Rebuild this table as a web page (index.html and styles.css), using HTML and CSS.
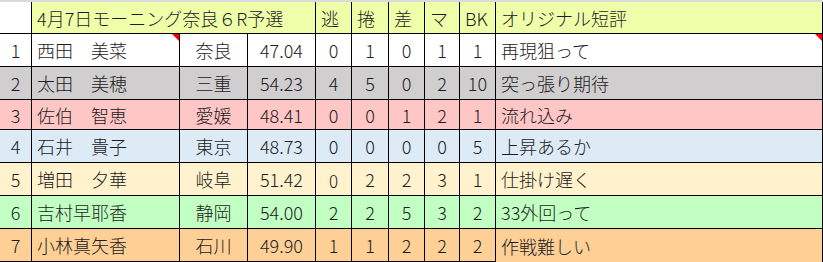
FILE: index.html
```html
<!DOCTYPE html>
<html lang="ja">
<head>
<meta charset="utf-8">
<title>4月7日モーニング奈良６R予選</title>
<link rel="stylesheet" href="styles.css">
</head>
<body>
<div class="sheet">
  <div class="row head">
    <div class="cell corner"></div>
    <div class="cell left">4月7日モーニング奈良６R予選</div>
    <div class="cell left">逃</div>
    <div class="cell left">捲</div>
    <div class="cell left">差</div>
    <div class="cell left">マ</div>
    <div class="cell left">BK</div>
    <div class="cell left">オリジナル短評</div>
  </div>
  <div class="row r1">
    <div class="cell">1</div>
    <div class="cell left note">西田　美菜</div>
    <div class="cell">奈良</div>
    <div class="cell">47.04</div>
    <div class="cell">0</div>
    <div class="cell">1</div>
    <div class="cell">0</div>
    <div class="cell">1</div>
    <div class="cell">1</div>
    <div class="cell left note">再現狙って</div>
  </div>
  <div class="row r2">
    <div class="cell">2</div>
    <div class="cell left">太田　美穂</div>
    <div class="cell">三重</div>
    <div class="cell">54.23</div>
    <div class="cell">4</div>
    <div class="cell">5</div>
    <div class="cell">0</div>
    <div class="cell">2</div>
    <div class="cell">10</div>
    <div class="cell left">突っ張り期待</div>
  </div>
  <div class="row r3 short">
    <div class="cell">3</div>
    <div class="cell left">佐伯　智恵</div>
    <div class="cell">愛媛</div>
    <div class="cell">48.41</div>
    <div class="cell">0</div>
    <div class="cell">0</div>
    <div class="cell">1</div>
    <div class="cell">2</div>
    <div class="cell">1</div>
    <div class="cell left">流れ込み</div>
  </div>
  <div class="row r4">
    <div class="cell">4</div>
    <div class="cell left">石井　貴子</div>
    <div class="cell">東京</div>
    <div class="cell">48.73</div>
    <div class="cell">0</div>
    <div class="cell">0</div>
    <div class="cell">0</div>
    <div class="cell">0</div>
    <div class="cell">5</div>
    <div class="cell left">上昇あるか</div>
  </div>
  <div class="row r5">
    <div class="cell">5</div>
    <div class="cell left">増田　夕華</div>
    <div class="cell">岐阜</div>
    <div class="cell">51.42</div>
    <div class="cell small">0</div>
    <div class="cell">2</div>
    <div class="cell">2</div>
    <div class="cell">3</div>
    <div class="cell">1</div>
    <div class="cell left">仕掛け遅く</div>
  </div>
  <div class="row r6">
    <div class="cell">6</div>
    <div class="cell left">吉村早耶香</div>
    <div class="cell">静岡</div>
    <div class="cell">54.00</div>
    <div class="cell">2</div>
    <div class="cell">2</div>
    <div class="cell">5</div>
    <div class="cell">3</div>
    <div class="cell">2</div>
    <div class="cell left">33外回って</div>
  </div>
  <div class="row r7">
    <div class="cell">7</div>
    <div class="cell left">小林真矢香</div>
    <div class="cell">石川</div>
    <div class="cell">49.90</div>
    <div class="cell">1</div>
    <div class="cell">1</div>
    <div class="cell">2</div>
    <div class="cell">2</div>
    <div class="cell">2</div>
    <div class="cell left open">作戦難しい</div>
  </div>
</div>
</body>
</html>
```

FILE: styles.css
```css
html, body {
  margin: 0;
  padding: 0;
  background: #ffffff;
}

.sheet {
  width: 823px;
  border-top: 2px solid #dadada;
  font-family: "Noto Sans CJK JP", "Noto Sans", sans-serif;
  font-size: 18px;
  font-weight: 300;
  color: #1c1c24;
}

.row {
  display: grid;
  grid-template-columns: 32px 148px 68px 68px 36px 37px 36px 35px 36px 327px;
  height: 33px;
}

.row.short {
  height: 30px;
}

.row.head {
  grid-template-columns: 32px 284px 36px 37px 36px 35px 36px 327px;
  height: 32px;
  background: #efffa9;
}

.cell {
  box-sizing: border-box;
  border-right: 1px solid #000;
  border-bottom: 1px solid #000;
  display: flex;
  align-items: center;
  justify-content: center;
  white-space: nowrap;
  line-height: 1;
  position: relative;
}

.cell.left {
  justify-content: flex-start;
  padding-left: 5px;
}

.cell.corner {
  background: #ffffff;
}

.cell.note::after {
  content: "";
  position: absolute;
  top: 0;
  right: 0;
  width: 0;
  height: 0;
  border-top: 7px solid #ff0000;
  border-left: 7px solid transparent;
}

.cell.small {
  font-size: 17px;
  padding-top: 2px;
}

.cell.open {
  border-bottom: none;
}

.r1 { background: #ffffff; }
.r2 { background: #d0cece; }
.r3 { background: #ffc6c6; }
.r4 { background: #ddebf7; }
.r5 { background: #fff2cc; }
.r6 { background: #c2ffc2; }
.r7 { background: #ffd096; }
```
